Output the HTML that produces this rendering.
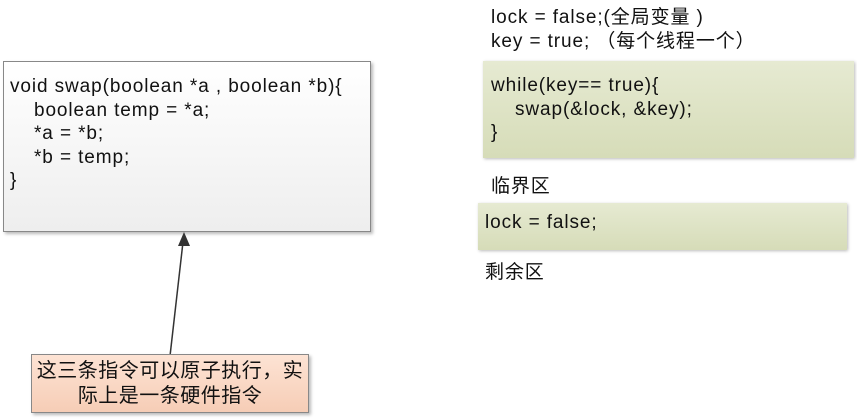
<!DOCTYPE html><html><head><style>
body{margin:0;width:857px;height:419px;background:#fff;position:relative;overflow:hidden;font-family:"Liberation Sans","Noto Sans CJK SC",sans-serif;font-size:19px;letter-spacing:0.9px;color:#111}
.a{position:absolute;white-space:pre;line-height:23.5px}
.i{padding-left:24px}
.box{position:absolute;box-sizing:border-box}
</style></head><body>
<div class="box" style="left:3px;top:61px;width:368px;height:171px;border:1px solid #888;background:linear-gradient(#fff,#eee);box-shadow:2px 2px 3px #bbb"></div>
<div class="a" style="left:10px;top:75px">void swap(boolean *a , boolean *b){
<span class="i">boolean temp = *a;</span>
<span class="i">*a = *b;</span>
<span class="i">*b = temp;</span>
}</div>
<svg style="position:absolute;left:0;top:0" width="857" height="419"><line x1="170" y1="356" x2="183" y2="242" stroke="#333" stroke-width="1.5"/><polygon points="184,232 178,246 190,246" fill="#333"/></svg>
<div class="box" style="left:31px;top:354px;width:278px;height:59px;border:1px solid #888;background:linear-gradient(#fde3d4,#f6cdb6);box-shadow:2px 2px 3px #bbb"></div>
<div class="a" style="left:31px;top:359px;width:278px;text-align:center;line-height:25px;font-size:20px;letter-spacing:0.5px">这三条指令可以原子执行，实
际上是一条硬件指令</div>
<div class="a" style="left:491px;top:6px;line-height:24px">lock = false;(全局变量 )
key = true; （每个线程一个）</div>
<div class="box" style="left:483px;top:61px;width:371px;height:97px;background:linear-gradient(#e6ead2,#d6dcb8);box-shadow:1px 1px 3px #bbb"></div>
<div class="a" style="left:491px;top:74px">while(key== true){
<span class="i">swap(&amp;lock, &amp;key);</span>
}</div>
<div class="a" style="left:491px;top:175px">临界区</div>
<div class="box" style="left:478px;top:203px;width:369px;height:47px;background:linear-gradient(#e6ead2,#d6dcb8);box-shadow:1px 1px 3px #bbb"></div>
<div class="a" style="left:485px;top:211px">lock = false;</div>
<div class="a" style="left:485px;top:261px">剩余区</div>
</body></html>
